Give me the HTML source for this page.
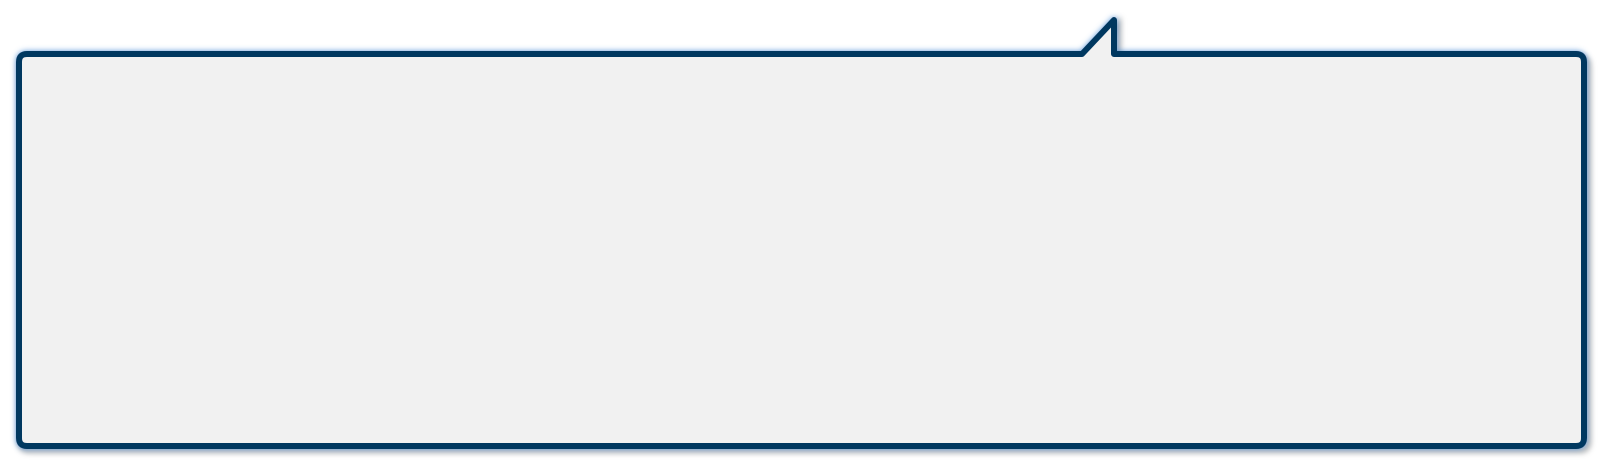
<!DOCTYPE html>
<html><head><meta charset="utf-8"><style>
html,body{margin:0;padding:0;background:#fff;width:1614px;height:476px;overflow:hidden}
svg{display:block}
</style></head><body>
<svg width="1614" height="476" viewBox="0 0 1614 476" xmlns="http://www.w3.org/2000/svg">
<defs>
<filter id="glow" x="-5%" y="-20%" width="110%" height="140%">
<feGaussianBlur in="SourceAlpha" stdDeviation="3" result="b"/>
<feFlood flood-color="#4d8fd8" flood-opacity="0.9"/>
<feComposite in2="b" operator="in" result="g"/>
<feMerge><feMergeNode in="g"/><feMergeNode in="SourceGraphic"/></feMerge>
</filter>
<filter id="sh" x="-5%" y="-20%" width="110%" height="140%">
<feGaussianBlur stdDeviation="3"/>
</filter>
</defs>
<path d="M 29,58 H 1086 L 1118,24 V 58 H 1580 Q 1588 58 1588 66 V 442 Q 1588 450 1580 450 H 29 Q 21 450 21 442 V 66 Q 21 58 29 58 Z" fill="none" stroke="#000" stroke-opacity="0.3" stroke-width="6" filter="url(#sh)"/>
<path d="M 27,54 H 1082 L 1114,20 V 54 H 1576 Q 1584 54 1584 62 V 438 Q 1584 446 1576 446 H 27 Q 19 446 19 438 V 62 Q 19 54 27 54 Z" fill="#f1f1f1" stroke="#053761" stroke-width="6" stroke-linejoin="round" filter="url(#glow)"/>
</svg>
</body></html>
